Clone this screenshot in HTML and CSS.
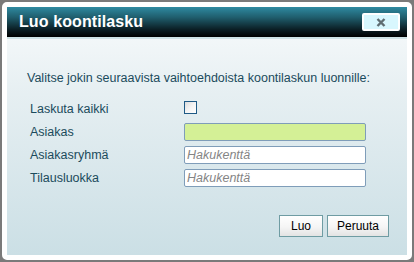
FILE: index.html
```html
<!DOCTYPE html>
<html lang="fi">
<head>
<meta charset="utf-8">
<title>Luo koontilasku</title>
<link rel="stylesheet" href="styles.css">
</head>
<body>
<div class="dialog">
  <div class="titlebar">
    <span class="title">Luo koontilasku</span>
    <button class="close" type="button" aria-label="Sulje">
      <svg width="10" height="9" viewBox="0 0 10 9"><path d="M1.5 1 L8.5 8 M8.5 1 L1.5 8" stroke="#5f6d72" stroke-width="2.4" fill="none"/></svg>
    </button>
  </div>
  <div class="sep"></div>
  <div class="content">
    <p class="intro">Valitse jokin seuraavista vaihtoehdoista koontilaskun luonnille:</p>
    <div class="form">
      <label class="lbl">Laskuta kaikki</label>
      <div class="ctl"><span class="check"></span></div>
      <label class="lbl">Asiakas</label>
      <div class="ctl"><input class="field green" type="text"></div>
      <label class="lbl">Asiakasryhmä</label>
      <div class="ctl"><input class="field" type="text" placeholder="Hakukenttä"></div>
      <label class="lbl">Tilausluokka</label>
      <div class="ctl"><input class="field" type="text" placeholder="Hakukenttä"></div>
    </div>
    <div class="buttons">
      <button class="btn btn-luo" type="button">Luo</button>
      <button class="btn btn-cancel" type="button">Peruuta</button>
    </div>
  </div>
</div>
</body>
</html>
```
FILE: styles.css
```css
html, body {
  margin: 0;
  height: 100%;
}
body {
  background: #7a7a7a;
  padding: 2px 2px 2px 2px;
  box-sizing: border-box;
  font-family: "Liberation Sans", Arial, sans-serif;
}
.dialog {
  box-sizing: border-box;
  height: 258px;
  border: 5px solid #ffffff;
  border-radius: 5px;
  display: flex;
  flex-direction: column;
  background: linear-gradient(to bottom, #f9fbfc 0%, #e6eff2 35%, #cbdfe5 100%);
}
.titlebar {
  height: 30px;
  flex: none;
  display: flex;
  align-items: center;
  justify-content: space-between;
  padding: 0 7px 0 12px;
  background: linear-gradient(to bottom, #2f8aa1 0%, #1f5d6c 35%, #0b1e24 75%, #000000 100%);
}
.title {
  color: #ffffff;
  font-weight: bold;
  font-size: 16px;
  letter-spacing: 0.1px;
}
.close {
  box-sizing: border-box;
  width: 38px;
  height: 18px;
  margin-top: 0;
  border: 2px solid #ffffff;
  border-radius: 2px;
  background: #d8f7fe;
  padding: 0;
  display: flex;
  align-items: center;
  justify-content: center;
}
.sep {
  height: 2px;
  flex: none;
  background: #cfe3e6;
}
.content {
  flex: 1;
  padding: 32px 18px 0 20px;
  color: #1b4b5c;
}
.intro {
  margin: 0;
  font-size: 12.5px;
  line-height: 15px;
}
.form {
  margin-top: 11px;
  display: grid;
  grid-template-columns: 154px 182px;
  grid-auto-rows: 23px;
  padding-left: 3px;
  font-size: 12.5px;
}
.lbl {
  display: flex;
  align-items: center;
}
.ctl {
  display: flex;
  align-items: center;
}
.check {
  box-sizing: border-box;
  width: 13px;
  height: 13px;
  border: 1px solid #1f5a86;
  background: linear-gradient(135deg, #dcdcdc 0%, #f4f4f4 50%, #ffffff 100%);
  margin-top: -2px;
}
.field {
  box-sizing: border-box;
  width: 182px;
  height: 18px;
  margin: 0;
  border: 1px solid #7f9db9;
  border-radius: 2px;
  background: #ffffff;
  padding: 0 2px;
  font-family: "Liberation Sans", Arial, sans-serif;
  font-size: 12.5px;
  font-style: italic;
  color: #333;
  outline: none;
}
.field::placeholder {
  color: #858585;
}
.field.green {
  background: #d4f096;
}
.buttons {
  margin-top: 26px;
  display: flex;
  justify-content: flex-end;
  gap: 4px;
}
.btn {
  box-sizing: border-box;
  height: 22px;
  border: 1px solid #6f9ca3;
  background: linear-gradient(to bottom, #ffffff 0%, #f5f5f5 55%, #e3e3e3 100%);
  font-family: "Liberation Sans", Arial, sans-serif;
  font-size: 12px;
  color: #000;
  padding: 0;
}
.btn-luo { width: 44px; }
.btn-cancel { width: 62px; }
```
